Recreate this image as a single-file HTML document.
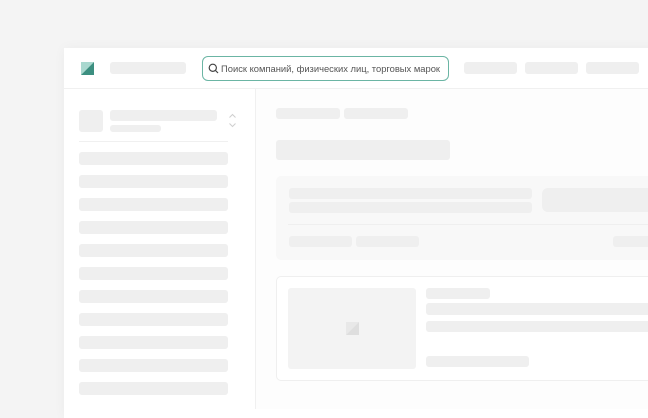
<!DOCTYPE html>
<html><head><meta charset="utf-8"><style>
*{margin:0;padding:0;box-sizing:border-box}
body{width:648px;height:404px;background:#f4f4f4;position:relative;overflow:hidden;font-family:"Liberation Sans",sans-serif}
.a{position:absolute}
.s{position:absolute;background:#efefef;border-radius:3px}
</style></head><body>
<div class="a" style="left:64px;top:48px;width:600px;height:370px;background:#fff;box-shadow:0 0 12px rgba(0,0,0,0.04)"></div>
<div class="a" style="left:64px;top:88px;width:600px;height:1px;background:#f0f0f0"></div>
<div class="a" style="left:255px;top:89px;width:1px;height:320px;background:#f0f0f0"></div>
<div class="a" style="left:256px;top:89px;width:400px;height:320px;background:#fdfdfd"></div>
<svg class="a" style="left:81px;top:62px" width="13" height="13"><polygon points="0,0 13,0 0,13" fill="#a9d8cf"/><polygon points="13,0 13,13 0,13" fill="#3c8f80"/></svg>
<div class="s" style="left:110px;top:62px;width:76px;height:12px"></div>
<div class="a" style="left:202px;top:56px;width:247px;height:25px;border:1px solid #6bb5a4;border-radius:6px;background:#fff"></div>
<svg class="a" style="left:208px;top:63px" width="11" height="11"><circle cx="4.8" cy="4.8" r="3.6" fill="none" stroke="#444" stroke-width="1.2"/><line x1="7.5" y1="7.5" x2="10" y2="10" stroke="#444" stroke-width="1.2"/></svg>
<div class="a" style="left:221px;top:63px;font-size:9.4px;line-height:11px;color:#555;white-space:nowrap">Поиск компаний, физических лиц, торговых марок</div>
<div class="s" style="left:464px;top:62px;width:53px;height:12px"></div>
<div class="s" style="left:525px;top:62px;width:53px;height:12px"></div>
<div class="s" style="left:586px;top:62px;width:53px;height:12px"></div>
<div class="s" style="left:79px;top:110px;width:24px;height:22px"></div>
<div class="s" style="left:110px;top:110px;width:107px;height:11px"></div>
<div class="s" style="left:110px;top:125px;width:51px;height:7px"></div>
<svg class="a" style="left:228px;top:113px" width="9" height="15"><path d="M1.5 4.5 L4.5 1.5 L7.5 4.5 M1.5 10.5 L4.5 13.5 L7.5 10.5" fill="none" stroke="#cfcfcf" stroke-width="1"/></svg>
<div class="a" style="left:79px;top:141px;width:149px;height:1px;background:#f0f0f0"></div>
<div class="s" style="left:79px;top:152px;width:149px;height:13px"></div>
<div class="s" style="left:79px;top:175px;width:149px;height:13px"></div>
<div class="s" style="left:79px;top:198px;width:149px;height:13px"></div>
<div class="s" style="left:79px;top:221px;width:149px;height:13px"></div>
<div class="s" style="left:79px;top:244px;width:149px;height:13px"></div>
<div class="s" style="left:79px;top:267px;width:149px;height:13px"></div>
<div class="s" style="left:79px;top:290px;width:149px;height:13px"></div>
<div class="s" style="left:79px;top:313px;width:149px;height:13px"></div>
<div class="s" style="left:79px;top:336px;width:149px;height:13px"></div>
<div class="s" style="left:79px;top:359px;width:149px;height:13px"></div>
<div class="s" style="left:79px;top:382px;width:149px;height:13px"></div>
<div class="s" style="left:276px;top:108px;width:64px;height:11px"></div>
<div class="s" style="left:344px;top:108px;width:64px;height:11px"></div>
<div class="s" style="left:276px;top:140px;width:174px;height:20px"></div>
<div class="a" style="left:276px;top:176px;width:380px;height:84px;background:#f8f8f8;border-radius:5px"></div>
<div class="s" style="left:289px;top:188px;width:243px;height:11px"></div>
<div class="s" style="left:289px;top:202px;width:243px;height:11px"></div>
<div class="s" style="left:542px;top:188px;width:120px;height:24px;border-radius:6px"></div>
<div class="a" style="left:288px;top:224px;width:370px;height:1px;background:#efefef"></div>
<div class="s" style="left:289px;top:236px;width:63px;height:11px"></div>
<div class="s" style="left:356px;top:236px;width:63px;height:11px"></div>
<div class="s" style="left:613px;top:236px;width:40px;height:11px"></div>
<div class="a" style="left:276px;top:276px;width:380px;height:105px;border:1px solid #efefef;border-radius:5px;background:#fff"></div>
<div class="s" style="left:288px;top:288px;width:128px;height:81px;background:#f3f3f3"></div>
<svg class="a" style="left:346px;top:322px" width="13" height="13"><polygon points="0,0 13,0 0,13" fill="#e8e8e8"/><polygon points="13,0 13,13 0,13" fill="#dedede"/></svg>
<div class="s" style="left:426px;top:288px;width:64px;height:11px"></div>
<div class="s" style="left:426px;top:303px;width:230px;height:12px"></div>
<div class="s" style="left:426px;top:321px;width:230px;height:11px"></div>
<div class="s" style="left:426px;top:356px;width:103px;height:11px"></div>
</body></html>
